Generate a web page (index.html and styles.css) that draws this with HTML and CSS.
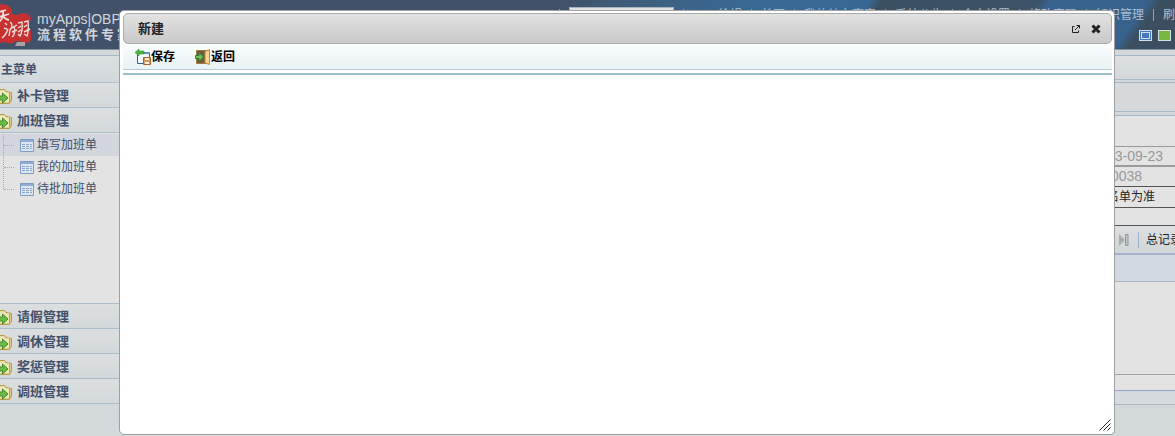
FILE: index.html
```html
<!DOCTYPE html>
<html lang="zh-CN">
  <head>
    <meta charset="UTF-8" />
    <meta name="viewport" content="width=device-width, initial-scale=1.0" />
    <title>新建 - myApps|OBPM</title>
    <link rel="stylesheet" href="styles.css">
  </head>
  <body>
    <!-- Shared icons -->
    <svg class="sprite" aria-hidden="true">
      <symbol id="icon-folder" viewBox="0 0 13 17">
        <path d="M-2 1.500H4.500L6 3.500L11.500 4.500V12L9.500 15.500H-2Z" fill="#e2cf85" stroke="#b89a48"/>
        <path d="M-2 2.500H4L5.500 4.500H9V14H-2Z" fill="#eee8bd"/>
        <path d="M9.500 5V14" stroke="#c0a04c"/>
        <path d="M-1 8H2.500V5L8 10L2.500 15V12H-1Z" fill="#6cbd45" stroke="#47892f"/>
      </symbol>
      <symbol id="icon-table" viewBox="0 0 14 13">
        <path d="M.500.500H13.500V12.500H.500Z" fill="#dce6f1" stroke="#7f9dc4"/>
        <path d="M1 1H13V3H1Z" fill="#8facd2"/>
        <path d="M2 5.500H5M6 5.500H9M10 5.500H12M2 7.500H5M6 7.500H9M10 7.500H12M2 9.500H5M6 9.500H9M10 9.500H12" stroke="#8ba7cc"/>
      </symbol>
    </svg>

    <!-- Header -->
    <header class="header">
      <div class="brand">
        <svg class="brand-logo" viewBox="0 0 32 47" aria-hidden="true">
          <path d="M-2 5L3 4L9 6L12 10V14L17 15L23 13L28 14L31 18L29 25L31 32L31 40L28 43L16 41L11 44L5 42L-2 43Z" fill="#c8302f"/>
          <path d="M-1 12L6 10M-1 17L9 14M3 11Q4 18 -1 22M3 16Q6 20 9 20" fill="none" stroke="#f0dcda" stroke-width="1.800"/>
          <path d="M5 23L7 25M4 28L7 29M2 38Q6 35 8 29M10 22Q14 25 10 30L9 36M10 29L17 25M14 26Q16 34 12 37M12 32L17 30M18 23L22 22Q23 31 20 36L18 34M18 28L21 26M18 32L21 30M24 22L28 21Q29 31 27 36L24 34M24 27L27 25M24 32L30 29" fill="none" stroke="#f0dcda" stroke-width="1.400"/>
          <path d="M17 42H25V46H15Z" fill="#a7a3a5"/>
        </svg>
        <div class="brand-text">
          <span class="brand-name">myApps|OBPM</span>
          <span class="brand-slogan">流程软件专家</span>
        </div>
      </div>
      <div class="header-side">
        <nav class="top-nav">
          <label class="search"><input type="text" aria-label="搜索"></label>
          <span class="user">徐娟</span>
          <a href="#">首页</a>
          <a href="#">我的待办事宜</a>
          <a href="#">系统公告</a>
          <a href="#">个人设置</a>
          <a href="#">修改密码</a>
          <a href="#">知识管理</a>
          <a href="#">刷新</a>
        </nav>
        <div class="skins">
          <button class="skin skin-blue" type="button" aria-label="蓝色"></button>
          <button class="skin skin-green" type="button" aria-label="绿色"></button>
        </div>
      </div>
    </header>

    <div class="page">
      <!-- Left menu -->
      <aside class="sidebar">
        <h2 class="menu-title">主菜单</h2>
        <a class="menu-group" href="#"><svg><use href="#icon-folder"/></svg>补卡管理</a>
        <a class="menu-group" href="#"><svg><use href="#icon-folder"/></svg>加班管理</a>
        <ul class="menu-items">
          <li class="active"><a href="#"><svg><use href="#icon-table"/></svg>填写加班单</a></li>
          <li><a href="#"><svg><use href="#icon-table"/></svg>我的加班单</a></li>
          <li><a href="#"><svg><use href="#icon-table"/></svg>待批加班单</a></li>
        </ul>
        <a class="menu-group" href="#"><svg><use href="#icon-folder"/></svg>请假管理</a>
        <a class="menu-group" href="#"><svg><use href="#icon-folder"/></svg>调休管理</a>
        <a class="menu-group" href="#"><svg><use href="#icon-folder"/></svg>奖惩管理</a>
        <a class="menu-group" href="#"><svg><use href="#icon-folder"/></svg>调班管理</a>
      </aside>

      <!-- Content behind the dialog -->
      <main class="content">
        <div class="tabs"></div>
        <div class="tools"></div>
        <div class="row row-blank"></div>
        <div class="row row-date">13-09-23</div>
        <div class="row row-code">0038</div>
        <div class="row row-note">名单为准</div>
        <div class="row row-empty"></div>
        <div class="pager">
          <button type="button" aria-label="末页">
            <svg viewBox="0 0 11 12"><path d="M1 0L7 6L1 12Z" fill="#a9adb0"/><path d="M7.500.500H10V11.500H7.500Z" fill="#c2c5c8" stroke="#929699"/></svg>
          </button>
          <span class="pager-total">总记录</span>
        </div>
        <div class="list-head"></div>
        <div class="list-body"></div>
        <div class="list-foot"></div>
        <div class="content-foot"></div>
      </main>
    </div>

    <!-- Dialog -->
    <section class="dialog" role="dialog" aria-labelledby="dialog-title">
      <div class="dialog-title">
        <h1 id="dialog-title">新建</h1>
        <button type="button" aria-label="在新窗口打开">
          <svg viewBox="0 0 10 10"><path d="M3.500 2.500H1.500V8.500H7.500V6.500M5.500 1.500H8.500V4.500M8.500 1.500L4 6" fill="none" stroke="#222"/></svg>
        </button>
        <button type="button" aria-label="关闭">
          <svg viewBox="0 0 10 10"><path d="M1.500 1.500L8.500 8.500M8.500 1.500L1.500 8.500" stroke="#222" stroke-width="3"/></svg>
        </button>
      </div>
      <div class="toolbar">
        <button type="button">
          <svg viewBox="0 0 16 16">
            <path d="M2.500 3.500H14.500V14.500H2.500Z" fill="#f5f9fd" stroke="#2b6193"/>
            <path d="M8 3H15V5H8Z" fill="#5a93c8"/>
            <path d="M0 3.500L4 0V2H9V5H4V7Z" fill="#4cb83c" stroke="#278427" stroke-width=".500"/>
            <path d="M8.500 8.500H15.500V15.500H8.500Z" fill="#d99a5c" stroke="#a8652c"/>
            <path d="M10 9H14V11H10ZM10 13H14V15H10Z" fill="#fff1dd"/>
          </svg>保存
        </button>
        <button type="button">
          <svg viewBox="0 0 16 16">
            <path d="M1.500 1.500H14.500V14.500H1.500Z" fill="#705a43" stroke="#a67a38"/>
            <path d="M10 2.500L14.500.500V15.500L10 14Z" fill="#f6d491" stroke="#c08a38"/>
            <path d="M.500 6.500H4V3.500L8.500 8L4 12.500V9.500H.500Z" fill="#6cc455" stroke="#2f7f36"/>
          </svg>返回
        </button>
      </div>
      <div class="dialog-body"></div>
      <svg class="resize" viewBox="0 0 12 12" aria-hidden="true"><path d="M.500 11.500L11.500.500M4.500 11.500L11.500 4.500M8.500 11.500L11.500 8.500" stroke="#222"/></svg>
    </section>
  </body>
</html>
```

FILE: styles.css
```css
* {
  box-sizing: border-box;
}

body {
  margin: 0;
  min-height: 100vh;
  display: flex;
  flex-direction: column;
  overflow: hidden;
  background: #d3d8db;
  color: #222;
  font: 12px/16px "Liberation Sans", "Noto Sans CJK SC", sans-serif;
}

a {
  color: inherit;
  text-decoration: none;
}

button {
  display: flex;
  align-items: center;
  padding: 0;
  border: 0;
  background: none;
  font: inherit;
  color: inherit;
  cursor: pointer;
}

.sprite {
  display: none;
}

/* Header */
.header {
  display: flex;
  justify-content: space-between;
  height: 50px;
  overflow: hidden;
  border-bottom: 1px solid #8293a2;
  background:
    linear-gradient(125deg, transparent 72%, #3b4f61 73%, #3b5468 86%, transparent 87%, transparent 95%, #3b4f61 96%),
    linear-gradient(90deg, #41516a 0%, #41516a 48%, #3b6488 58%, #376a96 66%, #37618a 100%);
}

.brand {
  display: flex;
  gap: 5px;
}

.brand-logo {
  width: 32px;
  height: 47px;
}

.brand-text {
  padding-top: 10px;
  color: #d2d6db;
  white-space: nowrap;
}

.brand-text span {
  display: block;
}

.brand-name {
  font-size: 14px;
  line-height: 18px;
}

.brand-slogan {
  font-size: 13px;
  font-weight: bold;
  line-height: 14px;
  letter-spacing: 3px;
}

.header-side {
  padding-top: 7px;
}

.top-nav {
  display: flex;
  align-items: center;
  height: 16px;
  margin-right: -12px;
  color: #aebfce;
  white-space: nowrap;
}

.top-nav > * {
  display: flex;
  align-items: center;
  padding-left: 9px;
}

.top-nav > *::before {
  content: "";
  width: 1px;
  height: 12px;
  margin-right: 9px;
  background: #8fa5b8;
}

.search input {
  width: 105px;
  height: 16px;
  border: 1px solid #a9b4bd;
  background: #dfe2e4;
}

.top-nav .user::before {
  margin-right: 34px;
}

.skins {
  display: flex;
  justify-content: flex-end;
  gap: 6px;
  padding: 7px 4px 0 0;
}

.skin {
  width: 13px;
  height: 11px;
  border: 1px solid #d5dde5;
}

.skin-blue {
  background: #4676bb;
}

.skin-blue::after {
  content: "";
  width: 7px;
  height: 5px;
  margin: auto;
  border: 1px solid #d5dde5;
}

.skin-green {
  background: #76b83f;
}

.page {
  display: flex;
  flex: 1;
}

/* Left menu */
.sidebar {
  width: 119px;
  padding-top: 5px;
  color: #40506a;
}

.menu-title {
  height: 28px;
  margin: 0;
  padding-left: 1px;
  border-top: 1px solid #a5b9c6;
  border-bottom: 1px solid #b0c1cb;
  background: linear-gradient(#dadfe2, #d2d8db);
  font-size: 12px;
  line-height: 28px;
}

.menu-group {
  display: flex;
  align-items: center;
  gap: 4px;
  height: 25px;
  padding-top: 2px;
  border-bottom: 1px solid #a9bdca;
  background: linear-gradient(#dcdfe0, #d3d8da);
  font-size: 13px;
  font-weight: bold;
}

.menu-group svg {
  width: 13px;
  height: 17px;
}

.menu-items {
  height: 171px;
  margin: 0;
  padding: 1px 0 0;
  border-bottom: 1px solid #a9bdca;
  background: #e3e3e3;
  list-style: none;
}

.menu-items li {
  height: 22px;
  background: repeating-linear-gradient(#aaa 0 1px, transparent 1px 2px) 3px 0 / 1px 100% no-repeat;
}

.menu-items li:last-child {
  background-size: 1px 50%;
}

.menu-items .active {
  background-color: #d3d7dd;
}

.menu-items a {
  display: flex;
  align-items: center;
  gap: 3px;
  height: 22px;
  padding-left: 4px;
}

.menu-items a::before {
  content: "";
  width: 10px;
  margin-right: 3px;
  border-top: 1px dotted #aaa;
}

.menu-items svg {
  width: 14px;
  height: 13px;
}

/* Content behind the dialog */
.content {
  flex: 1;
  padding-top: 5px;
}

.content > div {
  overflow: hidden;
  white-space: nowrap;
}

.tabs {
  height: 25px;
  border-top: 1px solid #a2b8c8;
  border-bottom: 1px solid #a9b9c3;
  background: linear-gradient(#dde0e1, #d3d8da);
}

.tools {
  height: 30px;
  margin-top: 2px;
  border: 1px solid #a0b8c9;
  border-width: 1px 0;
  background: #d5d9dc;
}

.row {
  padding-left: calc(100% - 68px);
  background: #e3e3e3;
}

.row-blank {
  height: 32px;
  margin-top: 3px;
  border-top: 1px solid #9eb6ca;
  border-bottom: 1px solid #999;
}

.row-date,
.row-code {
  height: 20px;
  color: #999;
  font-size: 14px;
  line-height: 18px;
}

.row-date {
  border-bottom: 2px solid #9b9b9b;
}

.row-code {
  padding-left: calc(100% - 64px);
  border-bottom: 1px solid #555;
}

.row-note {
  height: 21px;
  border-bottom: 1px solid #555;
  line-height: 20px;
}

.row-empty {
  height: 18px;
  border-bottom: 1px solid #555;
}

.pager {
  display: flex;
  align-items: center;
  height: 29px;
  padding-left: calc(100% - 57px);
  border-bottom: 2px solid #a5b0cc;
  background: linear-gradient(#dcdfe1, #d1d6d9);
}

.pager svg {
  width: 11px;
  height: 12px;
}

.pager-total {
  margin-left: 9px;
  padding-left: 7px;
  border-left: 1px solid #9eb3cb;
}

.list-head {
  height: 27px;
  border-bottom: 1px solid #a9b5c5;
  background: #d1d8e2;
}

.list-body {
  height: 93px;
  border-bottom: 1px solid #9da5ab;
  background: #e3e3e3;
}

.list-foot {
  height: 16px;
  border-bottom: 1px solid #93a7cd;
  background: #e3e3e3;
}

.content-foot {
  height: 14px;
  border-bottom: 1px solid #adb8c0;
  background: #d6dbdf;
}

/* Dialog */
.dialog {
  position: absolute;
  inset: 10px 60px 1px 119px;
  display: flex;
  flex-direction: column;
  padding: 2px 2px 2px 3px;
  border: 1px solid #a0a0a0;
  border-radius: 5px;
  background: #fff;
}

.dialog-title {
  display: flex;
  align-items: center;
  gap: 10px;
  height: 31px;
  padding: 0 10px 0 14px;
  border: 1px solid #aaa;
  border-radius: 5px;
  background: linear-gradient(#e2e2e2, #c9c9c9);
}

.dialog-title h1 {
  flex: 1;
  margin: 0;
  font-size: 13px;
}

.dialog-title svg {
  width: 10px;
  height: 10px;
}

.toolbar {
  display: flex;
  gap: 20px;
  height: 26px;
  padding-left: 12px;
  border-bottom: 1px solid #b5cbd1;
  background: linear-gradient(#fafdfd, #e9f2f4);
  color: #000;
  font-weight: bold;
}

.toolbar svg {
  width: 16px;
  height: 16px;
}

.dialog-body {
  flex: 1;
  margin-top: 3px;
  border-top: 2px solid #9bbccb;
}

.resize {
  position: absolute;
  right: 3px;
  bottom: 3px;
  width: 12px;
  height: 12px;
}
```
